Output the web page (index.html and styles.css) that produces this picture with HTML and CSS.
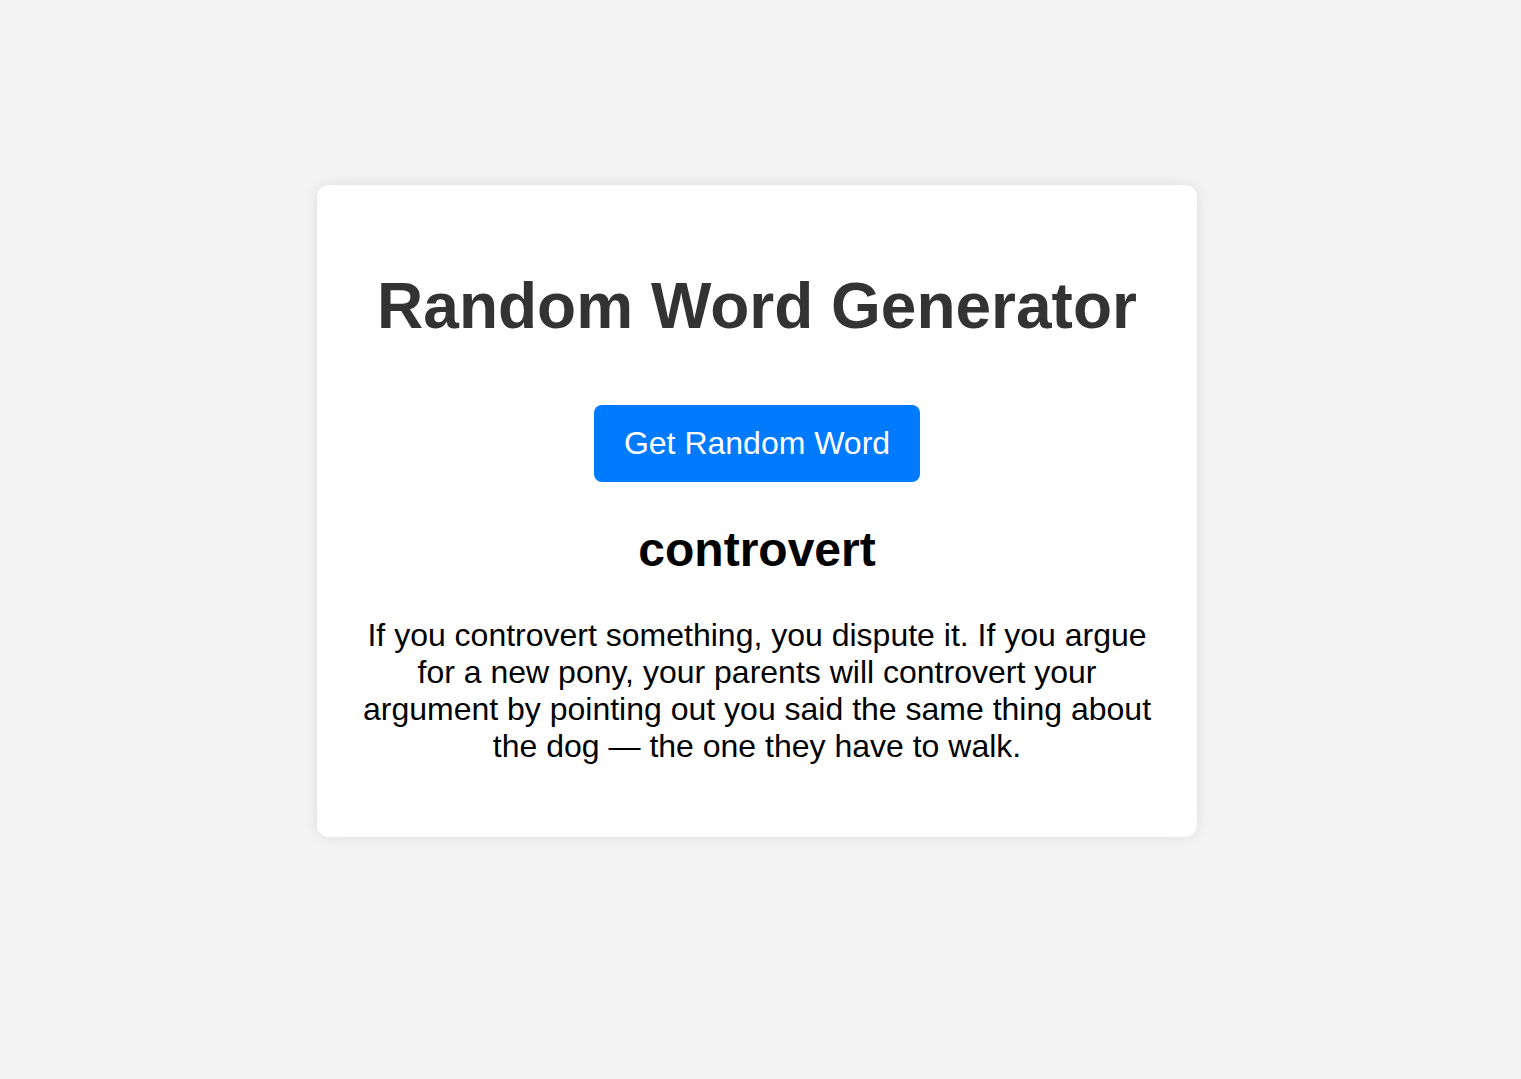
FILE: index.html
```html
<!DOCTYPE html>
<html lang="en">
<head>
<meta charset="utf-8">
<title>Random Word Generator</title>
<link rel="stylesheet" href="styles.css">
</head>
<body>
<main class="card">
  <h1 class="title">Random Word Generator</h1>
  <button class="btn" type="button">Get Random Word</button>
  <h2 class="word">controvert</h2>
  <p class="definition">If you controvert something, you dispute it. If you argue for a new pony, your parents will controvert your argument by pointing out you said the same thing about the dog — the one they have to walk.</p>
</main>
</body>
</html>
```
FILE: styles.css
```css
html, body {
  margin: 0;
  padding: 0;
}
body {
  background: #f4f4f4;
  font-family: "Liberation Sans", Arial, sans-serif;
  font-size: 32px;
  color: #000;
  padding-top: 185px;
  padding-left: 317px;
  min-height: 1079px;
  box-sizing: border-box;
}
.card {
  width: 880px;
  box-sizing: border-box;
  padding: 40px;
  background: #fff;
  border-radius: 12px;
  box-shadow: 0 0 15px rgba(0, 0, 0, 0.1);
  text-align: center;
  display: flow-root;
}
.title {
  font-size: 64px;
  font-weight: bold;
  color: #333;
  margin: 44px 0 62px;
  line-height: normal;
}
.btn {
  display: block;
  margin: 0 auto;
  font-family: inherit;
  font-size: 32px;
  line-height: normal;
  color: #fff;
  background: #007bff;
  border: none;
  border-radius: 8px;
  padding: 20px 30px;
  cursor: pointer;
}
.word {
  font-size: 48px;
  font-weight: bold;
  margin: 40px 0 40px;
  line-height: normal;
}
.definition {
  margin: 0 0 32px;
  line-height: normal;
}
```
